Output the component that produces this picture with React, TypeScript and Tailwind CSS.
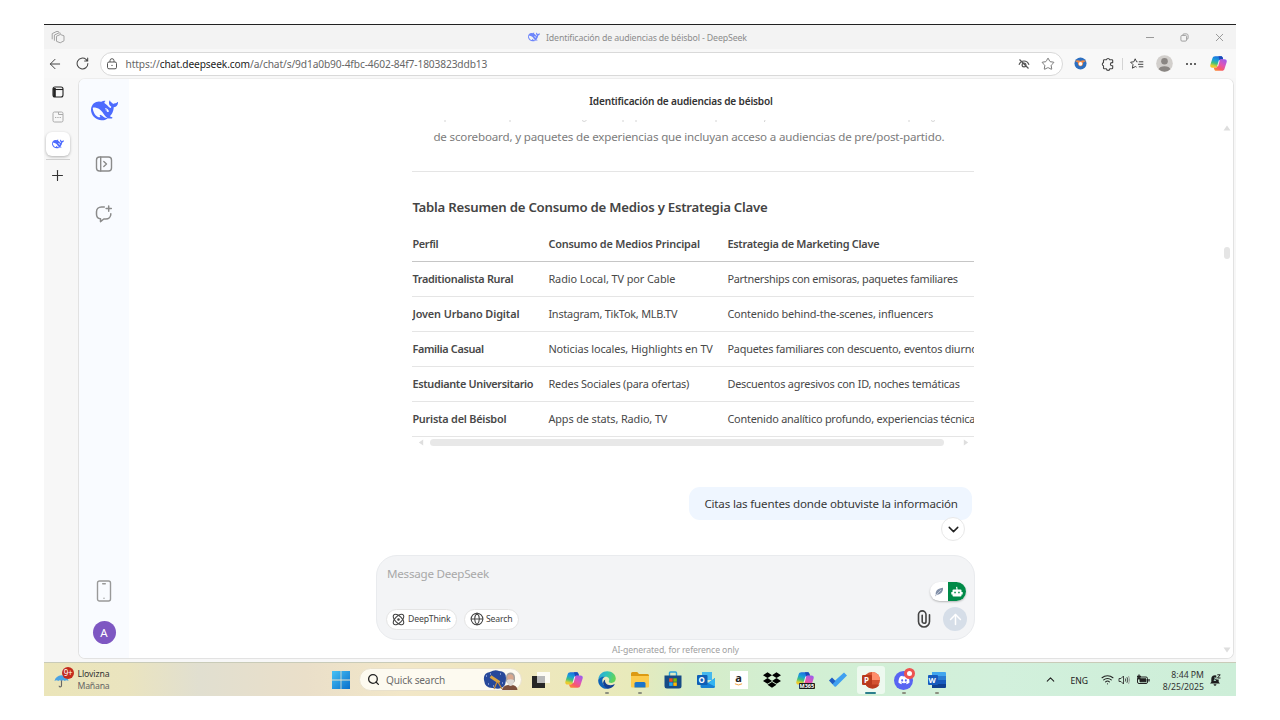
import React from 'react';
import { ArrowLeft, ArrowUp, ChevronDown, ChevronUp, Globe, Plus, Search, Star, Wifi, X } from 'lucide-react';
import { FaDiscord, FaDropbox } from 'react-icons/fa';

type IconProps = { className?: string };

const WHALE =
  'M23.748 4.482c-.254-.124-.364.113-.512.234-.051.039-.094.09-.137.136-.372.397-.806.657-1.373.626-.829-.046-1.537.214-2.163.848-.133-.782-.575-1.248-1.247-1.548-.352-.156-.708-.311-.955-.65-.172-.241-.219-.51-.305-.774-.055-.16-.11-.323-.293-.35-.2-.031-.278.136-.356.276-.313.572-.434 1.202-.422 1.84.027 1.436.633 2.58 1.838 3.393.137.093.172.187.129.323-.082.28-.18.552-.266.833-.055.179-.137.217-.329.14a5.526 5.526 0 0 1-1.736-1.18c-.857-.828-1.631-1.742-2.597-2.458a11.365 11.365 0 0 0-.689-.471c-.985-.957.13-1.743.388-1.836.27-.098.093-.432-.779-.428-.872.004-1.67.295-2.687.684a3.055 3.055 0 0 1-.465.137 9.597 9.597 0 0 0-2.883-.102c-1.885.21-3.39 1.102-4.497 2.623C.082 8.606-.231 10.684.152 12.85c.403 2.284 1.569 4.175 3.36 5.653 1.858 1.533 3.997 2.284 6.438 2.14 1.482-.085 3.133-.284 4.994-1.86.47.234.962.327 1.78.397.63.059 1.236-.03 1.705-.128.735-.156.684-.837.419-.961-2.155-1.004-1.682-.595-2.113-.926 1.096-1.296 2.746-2.642 3.392-7.003.05-.347.007-.565 0-.845-.004-.17.035-.237.23-.256a4.173 4.173 0 0 0 1.545-.475c1.396-.763 1.96-2.015 2.093-3.517.02-.23-.004-.467-.247-.588zM11.581 18c-2.089-1.642-3.102-2.183-3.52-2.16-.392.024-.321.471-.235.763.09.288.207.486.371.739.114.167.192.416-.113.603-.673.416-1.842-.14-1.897-.167-1.361-.802-2.5-1.86-3.301-3.307-.774-1.393-1.224-2.887-1.298-4.482-.02-.386.093-.522.477-.592a4.696 4.696 0 0 1 1.529-.039c2.132.312 3.946 1.265 5.468 2.774.868.86 1.525 1.887 2.202 2.891.72 1.066 1.494 2.082 2.48 2.914.348.292.625.514.891.677-.802.09-2.14.11-3.054-.614zm1-6.44a.306.306 0 0 1 .415-.287.302.302 0 0 1 .2.288.306.306 0 0 1-.31.307.303.303 0 0 1-.304-.308zm3.11 1.596c-.2.081-.399.151-.59.16a1.245 1.245 0 0 1-.798-.254c-.274-.23-.47-.358-.552-.758a1.73 1.73 0 0 1 .016-.588c.07-.327-.008-.537-.239-.727-.187-.156-.426-.199-.688-.199a.559.559 0 0 1-.254-.078.253.253 0 0 1-.114-.358c.028-.054.16-.186.192-.21.356-.202.767-.136 1.146.016.352.144.618.408 1.001.782.391.451.462.576.685.914.176.265.336.537.445.848.067.195-.019.354-.25.452z';

const Whale = ({ className }: IconProps) => (
  <svg viewBox="0 0 24 24" className={className} fill="#4d6bfe"><path d={WHALE} /></svg>
);

const Copilot = ({ className, id }: IconProps & { id: string }) => (
  <svg viewBox="0 0 18 18" className={className}>
    <defs>
      <linearGradient id={`${id}a`} x1=".5" y1="0" x2=".2" y2="1">
        <stop offset="0" stopColor="#1b6fe0" /><stop offset=".35" stopColor="#1aa0d8" /><stop offset=".6" stopColor="#3fbf7c" /><stop offset=".85" stopColor="#e3d030" /><stop offset="1" stopColor="#f8c22a" />
      </linearGradient>
      <linearGradient id={`${id}b`} x1=".9" y1="0" x2=".2" y2="1">
        <stop offset="0" stopColor="#9a5cf0" /><stop offset=".45" stopColor="#e055b4" /><stop offset=".75" stopColor="#f9596a" /><stop offset="1" stopColor="#fb8a34" />
      </linearGradient>
    </defs>
    <path d="M5.400 1.200h6.200c1 0 1.500.6 1.800 1.500l.6 2h-2c-1 0-1.600.7-1.900 1.600L8.200 12c-.3.900-.9 1.500-1.900 1.500H2.600C.6 13.500-.1 12.200.4 10.400l2.200-7c.4-1.400 1.300-2.200 2.800-2.200z" fill={`url(#${id}a)`} />
    <path d="M9 1.200h2.600c1 0 1.500.6 1.800 1.500l.6 2h-2c-.8 0-1.400.4-1.700 1z" fill="#1b48b8" />
    <path d="M12.600 16.800H6.400c-1 0-1.500-.6-1.800-1.500l-.6-1.900h2c1 0 1.600-.7 1.900-1.600L9.800 6c.3-.9.900-1.500 1.900-1.500h3.700c2 0 2.700 1.300 2.200 3.100l-2.200 7c-.4 1.400-1.300 2.200-2.800 2.200z" fill={`url(#${id}b)`} />
    <path d="M9.300 5.500h1L8.700 11.800H7.500z" fill="#fff" opacity=".85" />
  </svg>
);

const Tabs = () => (
  <svg viewBox="0 0 14 14" className="size-[14px]" fill="none" stroke="#a3a3a3" strokeWidth="1">
    <path d="M5.500 6.200 9.300 4.500l3.700 1.300v5L9.200 12.800 5.500 11.300z" />
    <path d="M3.400 10.700V5l4.700-2.200 1.700.6M1.200 9.300V3.600L6 1.300l2 .7" />
  </svg>
);

const Reload = () => (
  <svg viewBox="0 0 14 14" className="size-[13px]" fill="none" stroke="#444" strokeWidth="1.100" strokeLinecap="round">
    <path d="M12.800 7a5.800 5.800 0 1 1-2-4.400l1.600 1.600M12.600 1v3.300H9.300" />
  </svg>
);

const Lock = () => (
  <svg viewBox="0 0 12 12" className="size-[12px]" fill="none" stroke="#555" strokeWidth="1">
    <rect x="1.500" y="4" width="9" height="6.800" rx="1.500" /><path d="M4 4V2.700a2 2 0 0 1 4 0V4" /><circle cx="6" cy="7.400" r=".7" fill="#555" stroke="none" />
  </svg>
);

const EyeOff = () => (
  <svg viewBox="0 0 12 12" className="size-[12px]" fill="none" stroke="#555" strokeWidth="1.200">
    <path d="M1 6.800C2 4.300 4 3 6 3s4 1.300 5 3.800" /><circle cx="6" cy="7" r="1.900" /><path d="M1.500 1.500l9 9" />
  </svg>
);

const Bird = () => (
  <svg viewBox="0 0 14 14" className="size-[13px]">
    <circle cx="7" cy="7" r="6.500" fill="#2d6fc0" /><path d="M1 4.300Q4 2.500 7 4.200 10 2.500 13 4.300L9.800 5.800Q10 9.500 7 10 4 9.500 4.200 5.800z" fill="#f08a48" /><circle cx="7" cy="7.300" r="2" fill="#fff" />
  </svg>
);

const PuzzleIcon = () => (
  <svg viewBox="0 0 14 14" className="size-[14px]" fill="none" stroke="#444" strokeWidth="1.100" strokeLinejoin="round">
    <path d="M3.300 2.800h2.100a1.700 1.700 0 0 1 3.300 0h2.200a.8.8 0 0 1 .8.8v2H11a1.500 1.500 0 0 0 0 3.200h.7v2.100a.8.8 0 0 1-.8.800H8.800a1.700 1.700 0 0 1-3.400 0H3.300a.8.8 0 0 1-.8-.8V8.700a1.600 1.600 0 0 1 0-3.100v-2a.8.8 0 0 1 .8-.8z" />
  </svg>
);

const Favorites = () => (
  <svg viewBox="0 0 14 14" className="size-[14px]" fill="none" stroke="#444" strokeWidth="1" strokeLinejoin="round">
    <path d="M7.500 4.800H6.600L5.200 1.800 3.800 4.800l-3.200.4 2.400 2.400-.6 3.600 3-1.700 1.200.7" /><path d="M8.800 4.800h4.500M8 7.300h5.300M8.800 9.800h4.500" />
  </svg>
);

const Profile = () => (
  <svg viewBox="0 0 18 18" className="size-[17px]">
    <circle cx="9" cy="9" r="8.800" fill="#d2cfcc" /><circle cx="9" cy="6.600" r="3.500" fill="#8a8683" /><path d="M2.800 15.200C3.500 12.600 5.500 11.800 9 11.800s5.500.8 6.200 3.400A8.800 8.800 0 0 1 2.800 15.200z" fill="#8a8683" />
  </svg>
);

const Restore = () => (
  <svg viewBox="0 0 10 10" className="size-[9px]" fill="none" stroke="#999" strokeWidth="1">
    <rect x="1" y="2.700" width="6.300" height="6.300" rx="1.300" /><path d="M3 2.500C3 1.500 3.500 1 4.500 1H7c1.300 0 2 .7 2 2v2.500C9 6.500 8.500 7 7.500 7" />
  </svg>
);

const Slot = ({ className, children }: { className: string; children: React.ReactNode }) => (
  <div className={`flex h-full shrink-0 items-center justify-center ${className}`}>{children}</div>
);

const TitleBar = () => (
  <div className="flex h-[25px] shrink-0 items-center border-t border-[#222] bg-[#f3f3f3]">
    <Slot className="w-[28px]"><Tabs /></Slot>
    <div className="flex flex-1 items-center pl-[456px]">
      <Whale className="size-[12px] opacity-80" />
      <span className="ml-[6px] whitespace-nowrap pt-[1px] text-[8.8px] leading-[12px] tracking-[-0.152px] text-[#8c8c8c]">Identificación de audiencias de béisbol - DeepSeek</span>
    </div>
    <Slot className="w-[34px]"><span className="h-px w-[8px] bg-[#999]" /></Slot>
    <Slot className="w-[35px]"><Restore /></Slot>
    <Slot className="w-[34px]"><X className="size-[13px] text-[#8c8c8c]" strokeWidth={1.600} /></Slot>
  </div>
);

const Toolbar = () => (
  <div className="flex h-[29px] shrink-0 items-center bg-[#f8f8f8]">
    <Slot className="w-[22px]"><ArrowLeft className="size-[16px] text-[#444]" strokeWidth={1.500} /></Slot>
    <Slot className="w-[32px]"><Reload /></Slot>
    <div className="ml-[2px] mr-[4px] flex h-[24px] flex-1 items-center rounded-full border border-[#d9d9d9] bg-white pl-[5px] pr-[7px]">
      <Lock />
      <span className="ml-[7.500px] flex-1 whitespace-nowrap text-[10.2px] leading-[14px] tracking-[-0.123px] text-[#666]">
        https://<span className="text-[#222]">chat.deepseek.com</span>/a/chat/s/9d1a0b90-4fbc-4602-84f7-1803823ddb13
      </span>
      <EyeOff />
      <Star className="ml-[11px] size-[14px] text-[#666]" strokeWidth={1.500} />
    </div>
    <Slot className="w-[27px]"><Bird /></Slot>
    <Slot className="w-[27px]"><PuzzleIcon /></Slot>
    <span className="ml-[1px] h-[12px] w-px bg-[#d4d4d4]" />
    <Slot className="w-[28px]"><Favorites /></Slot>
    <Slot className="w-[26px]"><Profile /></Slot>
    <Slot className="w-[27px] gap-[2px]">
      <span className="size-[2px] rounded-full bg-[#333]" /><span className="size-[2px] rounded-full bg-[#333]" /><span className="size-[2px] rounded-full bg-[#333]" />
    </Slot>
    <Slot className="mr-[3px] w-[29px]"><Copilot id="bar" className="size-[17px]" /></Slot>
  </div>
);

const TabRail = () => (
  <div className="flex w-[34px] shrink-0 flex-col items-center bg-[#f7f7f7] pr-[7px] pt-[8px]">
    <svg viewBox="0 0 12 12" className="size-[12px]" fill="none" stroke="#222" strokeWidth="1.100">
      <rect x="1" y="1" width="10" height="10" rx="2" /><path d="M1 3.500h10" /><path d="M2.500 2v9" strokeWidth="2.600" />
    </svg>
    <svg viewBox="0 0 12 12" className="mt-[13px] size-[12px]" fill="none" stroke="#aaa" strokeWidth="1">
      <path d="M6.500 1H2.500Q1 1 1 2.500v7Q1 11 2.500 11h7Q11 11 11 9.500v-6M6.500 1v2.500H11V2.500Q11 1 9.500 1z" /><path d="M3 6.500h6" strokeDasharray="1.300 1" />
    </svg>
    <div className="mt-[9px] flex size-[24px] items-center justify-center rounded-[6px] bg-white shadow-[0_1px_3px_rgba(0,0,0,0.28)]"><Whale className="size-[12px]" /></div>
    <span className="mt-[3px] h-px w-[24px] bg-[#d0d0d0]" />
    <Plus className="mt-[7px] size-[17px] text-[#333]" strokeWidth={1.600} />
  </div>
);

const ChatSidebar = () => (
  <div className="flex w-[50px] shrink-0 flex-col items-center bg-[#f9fbff] pb-[14px] pt-[18px]">
    <Whale className="size-[27px]" />
    <svg viewBox="0 0 18 18" className="mt-[31px] size-[18px]" fill="none" stroke="#8b8b8b" strokeWidth="1.400" strokeLinecap="round" strokeLinejoin="round">
      <rect x="1.500" y="2" width="15" height="14" rx="3" /><path d="M5.700 2v14M8.800 6.500 11.500 9l-2.700 2.500" />
    </svg>
    <svg viewBox="0 0 18 18" className="mt-[32px] size-[18px]" fill="none" stroke="#8b8b8b" strokeWidth="1.500" strokeLinecap="round" strokeLinejoin="round">
      <path d="M9.300 2H6.500C3.600 2 1.500 4 1.500 6.800v2.400C1.500 12 3.200 13.500 5.500 13.800V16.700L8.800 14h1.900c3 0 5.100-2 5.100-4.800V8.700M13.700 1v5.200M11.100 3.600h5.200" />
    </svg>
    <div className="flex-1" />
    <svg viewBox="0 0 16 22" className="h-[22px] w-[16px]" fill="none" stroke="#999" strokeWidth="1.400" strokeLinecap="round">
      <rect x="1.500" y="1" width="13" height="20" rx="2" /><path d="M6.700 3.700h2.600M8 18.300h.01" />
    </svg>
    <div className="mt-[19px] flex size-[23px] items-center justify-center rounded-full bg-[#7e57c2] text-[11.500px] leading-[23px] text-white">A</div>
  </div>
);

const ROWS = [
  { a: 'Traditionalista Rural', at: 'tracking-[-0.29px]', b: 'Radio Local, TV por Cable', bt: 'tracking-[-0.07px]', c: 'Partnerships con emisoras, paquetes familiares', ct: 'tracking-[-0.261px]' },
  { a: 'Joven Urbano Digital', at: 'tracking-[-0.12px]', b: 'Instagram, TikTok, MLB.TV', bt: 'tracking-[-0.212px]', c: 'Contenido behind-the-scenes, influencers', ct: 'tracking-[-0.176px]' },
  { a: 'Familia Casual', at: 'tracking-[-0.34px]', b: 'Noticias locales, Highlights en TV', bt: 'tracking-[-0.109px]', c: 'Paquetes familiares con descuento, eventos diurnos', ct: 'tracking-[-0.22px]' },
  { a: 'Estudiante Universitario', at: 'tracking-[-0.325px]', b: 'Redes Sociales (para ofertas)', bt: 'tracking-[-0.19px]', c: 'Descuentos agresivos con ID, noches temáticas', ct: 'tracking-[-0.207px]' },
  { a: 'Purista del Béisbol', at: 'tracking-[-0.223px]', b: 'Apps de stats, Radio, TV', bt: 'tracking-[-0.112px]', c: 'Contenido analítico profundo, experiencias técnicas', ct: 'tracking-[-0.22px]' },
];

const SummaryTable = () => (
  <div className="w-[562px] overflow-hidden whitespace-nowrap text-[10.9px] leading-[16px] text-[#484848]">
    <div className="grid h-[35px] grid-cols-[136px_179px_247px] items-center border-b border-[#c6c6c6] font-semibold">
      <span className="tracking-[-0.34px]">Perfil</span>
      <span className="tracking-[-0.19px]">Consumo de Medios Principal</span>
      <span className="tracking-[-0.263px]">Estrategia de Marketing Clave</span>
    </div>
    {ROWS.map((r) => (
      <div key={r.a} className="grid h-[35px] grid-cols-[136px_179px_247px] items-center border-b border-[#e5e5e5]">
        <span className={`font-semibold ${r.at}`}>{r.a}</span>
        <span className={r.bt}>{r.b}</span>
        <span className={r.ct}>{r.c}</span>
      </div>
    ))}
    <div className="flex h-[11px] items-center justify-between pl-[6px] pr-[5px]">
      <svg viewBox="0 0 6 8" className="h-[7px] w-[6px]" fill="#dedede"><path d="M5.500.5v7L.5 4z" /></svg>
      <span className="ml-[6px] mr-auto h-[7px] w-[514px] rounded-full bg-[#e8e8e8]" />
      <svg viewBox="0 0 6 8" className="h-[7px] w-[6px]" fill="#dedede"><path d="M.5.5v7l5-3.500z" /></svg>
    </div>
  </div>
);

const Composer = () => (
  <div className="ml-[247px] flex h-[85px] w-[599px] shrink-0 flex-col rounded-[21px] border border-[#e9ebee] bg-[#f3f4f6] pl-[9px] pr-[7px] pt-[9px]">
    <div className="pl-[1px] text-[11.6px] leading-[17px] tracking-[-0.233px] text-[#a8a8a8]">Message DeepSeek</div>
    <div className="ml-auto mr-[1px] flex h-[19px] w-[36px] overflow-hidden rounded-full bg-white shadow-[0_1px_2px_rgba(0,0,0,0.25)]">
      <div className="flex w-[18px] items-center justify-center">
        <svg viewBox="0 0 10 10" className="size-[10px]"><path d="M1 9.500 1.800 7.500C1 4 4.500 1 9 .8 9.500 4 7 8 2.800 7.800z" fill="#8391a9" /><path d="M2 8 7 3" stroke="#dfe4ec" strokeWidth=".6" /></svg>
      </div>
      <div className="flex w-[18px] items-center justify-center bg-[#008a48]">
        <svg viewBox="0 0 12 12" className="size-[12px]" fill="#fff"><path d="M5.500 3.500 5 1l1.200-.3.400 2.800H9.500a1 1 0 0 1 1 1V6h1.200v2.500H10.500V9.500a1 1 0 0 1-1 1h-7a1 1 0 0 1-1-1v-1H.3V6H1.500V4.500a1 1 0 0 1 1-1z" /><path d="M3.300 5.700h1.500V7.200H3.300zM7.200 5.700h1.500V7.200H7.200z" fill="#008a48" /></svg>
      </div>
    </div>
    <div className="mt-[6px] flex h-[24px] items-center">
      <div className="flex h-[21px] w-[71px] items-center rounded-full border border-[#e4e4e4] bg-white pl-[5px] text-[8.7px] leading-[12px] tracking-[-0.17px] text-[#444]">
        <svg viewBox="0 0 14 14" className="mr-[3px] size-[13px] shrink-0" fill="none" stroke="#444" strokeWidth="1.200">
          <ellipse cx="7" cy="7" rx="7.200" ry="3.600" transform="rotate(45 7 7)" /><ellipse cx="7" cy="7" rx="7.200" ry="3.600" transform="rotate(-45 7 7)" /><circle cx="7" cy="7" r=".8" fill="#444" />
        </svg>
        DeepThink
      </div>
      <div className="ml-[7px] flex h-[21px] w-[55px] items-center rounded-full border border-[#e4e4e4] bg-white pl-[5px] text-[8.7px] leading-[12px] tracking-[-0.17px] text-[#444]">
        <Globe className="mr-[2px] size-[14px] shrink-0" strokeWidth={1.800} />
        Search
      </div>
      <svg viewBox="0 0 14 18" className="ml-auto mr-[12px] h-[18px] w-[14px]" fill="none" stroke="#444" strokeWidth="1.600" strokeLinecap="round">
        <path d="M12.500 4.800v6.700a5.500 5.500 0 0 1-11 0V4.600a3.700 3.700 0 0 1 7.500 0v6.800a1.900 1.900 0 0 1-3.800 0V5.200" />
      </svg>
      <div className="flex size-[24px] items-center justify-center rounded-full bg-[#d6dee8]"><ArrowUp className="size-[17px] text-white" strokeWidth={2.100} /></div>
    </div>
  </div>
);

const Chat = () => (
  <div className="relative flex min-w-0 flex-1 flex-col bg-white">
    <div className="flex h-[41px] shrink-0 items-center justify-center pt-[2px] text-[10.1px] font-semibold leading-[14px] tracking-[-0.184px] text-[#333]">Identificación de audiencias de béisbol</div>
    <svg viewBox="0 0 562 5" className="ml-[283px] h-[5px] w-[562px] shrink-0" fill="none" stroke="#d4d4d4" strokeWidth="1">
      <path d="M33 0v2M98 0v2M211 0v2M224 0v2M304 0v2M353 0l-.6 2M170 .5q2 2 4.500 0M497 0v2M519 .5q2 2 4 0" />
    </svg>
    <div className="ml-[283.400px] flex w-[562px] shrink-0 flex-col">
      <p className="h-[46px] whitespace-nowrap pl-[21px] pt-[2px] text-[11.6px] leading-[19px] tracking-[-0.172px] text-[#7c7c7c]">de scoreboard, y paquetes de experiencias que incluyan acceso a audiencias de pre/post-partido.</p>
      <hr className="border-[#e5e5e5]" />
      <h3 className="h-[55px] pt-[25px] text-[13.2px] font-semibold leading-[20px] tracking-[-0.237px] text-[#444]">Tabla Resumen de Consumo de Medios y Estrategia Clave</h3>
      <SummaryTable />
      <div className="ml-auto mr-[2px] mt-[39px] flex h-[33px] w-[283px] items-center whitespace-nowrap rounded-[11px] bg-[#eff6ff] pl-[15px] text-[11.6px] leading-[18px] tracking-[-0.179px] text-[#383838]">Citas las fuentes donde obtuviste la información</div>
    </div>
    <div className="-mt-[3px] mb-[14px] ml-[812px] flex size-[24px] shrink-0 items-center justify-center rounded-full border border-[#e8e8e8] bg-white"><ChevronDown className="size-[17px] text-[#222]" strokeWidth={2.100} /></div>
    <Composer />
    <div className="ml-[247px] w-[599px] pt-[4px] text-center text-[8.7px] leading-[13px] tracking-[-0.12px] text-[#a0a0a0]">AI-generated, for reference only</div>
    <div className="absolute inset-y-0 right-0 flex w-[12px] flex-col items-center pb-[5px] pt-[46px]">
      <svg viewBox="0 0 8 6" className="h-[6px] w-[8px]" fill="#dedede"><path d="M4 .5 7.500 5.500h-7z" /></svg>
      <span className="mt-[116px] h-[12px] w-[6px] rounded-full bg-[#e5e5e5]" />
      <svg viewBox="0 0 8 6" className="mt-auto h-[6px] w-[8px]" fill="#dedede"><path d="M4 5.500 7.500.5h-7z" /></svg>
    </div>
  </div>
);

const TaskItem = ({ children, mark, active }: { children: React.ReactNode; mark?: boolean; active?: boolean }) => (
  <div className="flex w-[33px] shrink-0 flex-col items-center pt-[3px]">
    <div className={`flex size-[28px] shrink-0 items-center justify-center rounded-[3px] ${active ? 'bg-white/60' : ''}`}>{children}</div>
    {active ? <span className="-mt-[2px] h-[2px] w-[11px] shrink-0 rounded-full bg-[#2b7f8c]" /> : mark ? <span className="-mt-[2px] h-[2px] w-[4px] shrink-0 rounded-full bg-[#8b8f7f]" /> : null}
  </div>
);

const Taskbar = () => (
  <div className="flex h-[34px] shrink-0 border-t border-[#c9cbb8] bg-[linear-gradient(90deg,#ebe5b9_0%,#eae4bf_7%,#e1dfd0_13%,#eadfc9_22%,#f2e7c8_30%,#efe7bd_40%,#e8eabb_49%,#d6ecc8_54%,#d2efd2_62%,#d2f0dc_80%,#cdeed8_100%)]">
    <div className="relative w-[33px] shrink-0">
      <svg viewBox="0 0 16 16" className="absolute left-[10px] top-[10px] size-[15px]"><path d="M.5 8.500Q2 3 8 2.500 14 3 15.500 8.500 13 7 11.500 8.500 10 7 8 8.500 6 7 4.500 8.500 3 7 .5 8.500z" fill="#4ba3e3" /><path d="M8 8v5.500q-.2 1.500-1.500 1.300-1-.2-1-1.300" fill="none" stroke="#666" strokeWidth="1.200" /></svg>
      <span className="absolute left-[18px] top-[4px] flex size-[12px] items-center justify-center rounded-full bg-[#c42b1c] text-[8px] leading-[12px] tracking-[-0.3px] text-white">9+</span>
    </div>
    <div className="w-[254px] shrink-0 pl-[0.500px] pt-[5px] text-[8.7px] leading-[12px]">
      <div className="tracking-[-0.11px] text-[#333]">Llovizna</div>
      <div className="tracking-[-0.2px] text-[#666]">Mañana</div>
    </div>
    <div className="flex h-full w-[20px] shrink-0 items-center justify-center">
      <svg viewBox="0 0 18 18" className="size-[18px]"><defs><linearGradient id="win" x1="0" y1="0" x2="1" y2="1"><stop offset="0" stopColor="#47c2f5" /><stop offset="1" stopColor="#0a6fcb" /></linearGradient></defs><path d="M0 0h8.600v8.600H0zM9.400 0H18v8.600H9.400zM0 9.400h8.600V18H0zM9.400 9.400H18V18H9.400z" fill="url(#win)" /></svg>
    </div>
    <div className="ml-[8px] mr-[2px] mt-[5px] flex h-[23px] w-[163px] shrink-0 items-center rounded-full border border-[#e9e1cc] bg-[#fdfaf0] pl-[7px]">
      <Search className="size-[13px] text-[#222]" strokeWidth={2.400} />
      <span className="ml-[6px] whitespace-nowrap text-[10.1px] leading-[14px] tracking-[-0.155px] text-[#6b6b6b]">Quick search</span>
      <svg viewBox="0 0 36 20" className="ml-auto mr-[3px] h-[20px] w-[36px]">
        <path d="M2 10Q1 3 8 2q5-3 9-1 7 0 7 7 0 7-3 9-4 3-9 1-9 1-10-8z" fill="#27489a" />
        <path d="M4 6h1M8 4h1M6 14h1M18 4h1M11 16h1M20 13h1" stroke="#cdd9ff" strokeWidth="1" />
        <path d="M8.500 6.500l9 6" stroke="#dba544" strokeWidth="3" /><path d="M15 12l-3 7M16 12l4 7" stroke="#c98d3c" strokeWidth="1.200" />
        <path d="M20 20q1-4.500 6-5h3q6 0 6.500 5z" fill="#7d4f3d" /><path d="M24 7q.5-4.500 4.500-4.500T33 7v3q0 3-4.500 4-4.500-1-4.500-4z" fill="#a5a09d" /><ellipse cx="28.400" cy="7.800" rx="3.200" ry="3.600" fill="#d8a78e" /><path d="M25 10q3.500-1.500 7 0 0 5.500-3.500 6Q25 15.500 25 10z" fill="#dcd8d5" />
      </svg>
    </div>
    <TaskItem><svg viewBox="0 0 18 18" className="size-[18px]"><path d="M0 5h13v12H0z" fill="#262626" /><path d="M5 1h13v11H5z" fill="#fff" opacity=".8" /><path d="M5 5h8v7H5z" fill="#b9b9b9" /></svg></TaskItem>
    <TaskItem><Copilot id="task" className="size-[18px]" /></TaskItem>
    <TaskItem mark>
      <svg viewBox="0 0 18 18" className="size-[18px]"><defs><linearGradient id="edge" x1="0" y1="0" x2="1" y2=".3"><stop offset="0" stopColor="#2a9fdf" /><stop offset=".5" stopColor="#2fc3bd" /><stop offset="1" stopColor="#61d45a" /></linearGradient></defs>
        <path d="M.3 8C1 3.500 4.500.2 9.200.2c5 0 8.600 3.500 8.600 7.300 0 2.600-1.900 4.400-4.300 4.400-2 0-3.300-.7-2.500-1.900 1-2-.5-4.300-3.300-4.300C4 5.700 1.500 7 .3 8z" fill="url(#edge)" />
        <path d="M.2 9.500C.2 7 3.500 5.300 7 5.700c-2 .8-3 2.600-2.600 5 .4 3 3 5.500 6.300 6.900-6 1.200-10.500-3-10.500-8.100z" fill="#0d62b8" />
        <path d="M7.200 8.500c-1.200 4 3.500 7.300 9 4.700.4-.2.700.1.500.4-1.600 2.700-4.500 4.300-7 4-4-1.300-6.700-6.400-2.500-9.100z" fill="#123f92" />
      </svg>
    </TaskItem>
    <TaskItem mark>
      <svg viewBox="0 0 18 18" className="size-[18px]"><path d="M0 2.500Q0 1 1.500 1h4.700L8 3h8.500Q18 3 18 4.500V8H0z" fill="#dc9a13" /><path d="M0 5h18v10.500q0 1-1 1H1q-1 0-1-1z" fill="#fccb4c" /><path d="M3.500 16.500v-4q0-1.500 1.500-1.500h8q1.500 0 1.500 1.500v4z" fill="#1b75ca" /></svg>
    </TaskItem>
    <TaskItem>
      <svg viewBox="0 0 18 18" className="size-[18px]"><path d="M5.500 5V2q0-1 1-1h5q1 0 1 1v3" fill="none" stroke="#2da3dd" strokeWidth="1.400" /><path d="M.5 4.500h17V15q0 2.500-2.500 2.500H3Q.5 17.500.5 15z" fill="#164b86" /><path d="M5.200 7.300h3.500v3.500H5.200z" fill="#f25022" /><path d="M9.300 7.300h3.500v3.500H9.300z" fill="#7fba00" /><path d="M5.200 11.400h3.500v3.500H5.200z" fill="#23a9f2" /><path d="M9.300 11.400h3.500v3.500H9.300z" fill="#ffb900" /></svg>
    </TaskItem>
    <TaskItem>
      <div className="relative size-[18px]">
        <svg viewBox="0 0 18 18" className="size-[18px]"><path d="M5 1h10v8H5z" fill="#45b8ee" /><path d="M3.500 7 11 12l7-5v8.500q0 1.500-1.500 1.500H5q-1.500 0-1.500-1.500z" fill="#1781d4" /><path d="M18 7v8.500L11 12z" fill="#32b5f1" /><rect y="4" width="10.500" height="10" rx="1" fill="#0f5fb5" /></svg>
        <span className="absolute left-[2px] top-[4px] text-[8px] font-bold leading-[10px] text-white">O</span>
      </div>
    </TaskItem>
    <TaskItem>
      <div className="flex h-[18px] w-[18px] flex-col items-center bg-white">
        <span className="h-[12px] text-[11px] font-bold leading-[13px] text-[#222]">a</span>
        <svg viewBox="0 0 10 3" className="h-[3px] w-[9px]" fill="none" stroke="#f29a2e" strokeWidth="1"><path d="M1 .7q4 2.600 8 0" /></svg>
      </div>
    </TaskItem>
    <TaskItem><FaDropbox className="size-[18px] text-black" /></TaskItem>
    <TaskItem>
      <div className="relative size-[18px]">
        <Copilot id="m365" className="size-[18px]" />
        <span className="absolute left-[3px] top-[12px] rounded-[1px] bg-[#1a1a1a] px-[1px] text-[5.500px] font-bold leading-[6px] text-white">M365</span>
      </div>
    </TaskItem>
    <TaskItem><svg viewBox="0 0 18 18" className="size-[18px]"><path d="M5.500 15.500 2.800 12.600 15 1.500 18 4.500 7 15.500q-.8.700-1.500 0z" fill="#3fa0f0" /><path d="M0 9.500 3 6.500 6.500 10 3.500 13.300z" fill="#1f5ec4" /></svg></TaskItem>
    <TaskItem active>
      <div className="relative size-[18px]">
        <svg viewBox="0 0 18 18" className="size-[18px]"><circle cx="10" cy="9" r="8" fill="#d35230" /><path d="M10 1a8 8 0 0 1 8 8h-8z" fill="#ff8f6b" /><path d="M3.500 13.500h14A8 8 0 0 1 3.500 13.500z" fill="#b93a1c" /><rect y="4" width="10" height="10" rx="1" fill="#b93a1c" /></svg>
        <span className="absolute left-[2.500px] top-[4px] text-[8px] font-bold leading-[10px] text-white">P</span>
      </div>
    </TaskItem>
    <TaskItem mark>
      <div className="relative flex size-[19px] items-center justify-center rounded-full bg-[#5865f2]">
        <FaDiscord className="size-[12px] text-white" />
        <span className="absolute -top-[3px] left-[10px] size-[11px] rounded-full border-[3.500px] border-[#ee5350] bg-white" />
      </div>
    </TaskItem>
    <TaskItem mark>
      <div className="relative size-[18px]">
        <svg viewBox="0 0 18 18" className="size-[18px]"><path d="M4 1h13q1 0 1 1v3.500H4z" fill="#41a5ee" /><path d="M4 5h14v4H4z" fill="#2b7cd3" /><path d="M4 9h14v4H4z" fill="#185abd" /><path d="M4 13h14v3q0 1-1 1H4z" fill="#103f91" /><rect y="4" width="10" height="10" rx="1" fill="#185abd" /></svg>
        <span className="absolute left-[1px] top-[4px] text-[7.500px] font-bold leading-[10px] text-white">W</span>
      </div>
    </TaskItem>
    <div className="flex flex-1 items-center justify-end pr-[15px] text-[#222]">
      <ChevronUp className="size-[13px]" strokeWidth={2} />
      <span className="ml-[13px] pt-[2px] text-[8.6px] leading-[12px]">ENG</span>
      <Wifi className="ml-[13px] size-[13px]" strokeWidth={2} />
      <svg viewBox="0 0 12 12" className="ml-[4px] size-[12px]" fill="none" stroke="#333" strokeWidth=".9" strokeLinejoin="round"><path d="M1 4.500h2L5.500 2v8L3 7.500H1zM7.300 4.500q1 1.500 0 3M8.900 3.200q1.900 2.800 0 5.600" /><path d="M10.500 2q2.300 4 0 8" stroke="#999" /></svg>
      <svg viewBox="0 0 14 12" className="ml-[6px] h-[12px] w-[14px]" fill="none" stroke="#222"><rect x="1.500" y="3" width="10" height="6.500" rx="1.500" /><path d="M4 4.800h6v3H4z" fill="#222" /><path d="M13 5v2.500" strokeWidth="1.300" /><path d="M3 .5v5M1 2.500h4M1.500 4.500h3" strokeWidth="1.300" /></svg>
      <div className="ml-[12px] w-[42px] whitespace-nowrap pt-[2px] text-right text-[8.7px] leading-[12px] text-[#333]"><div>8:44 PM</div><div>8/25/2025</div></div>
      <svg viewBox="0 0 12 12" className="ml-[5px] size-[12px]"><path d="M1 9.500 2.300 8V5a3.700 3.700 0 0 1 5-3.600V5.500h2.400V8l1.300 1.500zM4.500 10.200h3q-.3 1.500-1.500 1.500t-1.500-1.500z" fill="#1d1d1d" /><path d="M8.300.8h2.900L8.500 4h3" fill="none" stroke="#222" strokeWidth="1" /><path d="M5 4h2L5 6.500h2" fill="none" stroke="#cfe" strokeWidth=".7" /></svg>
    </div>
  </div>
);

export default function App() {
  return (
    <div className="h-[720px] w-[1280px] overflow-hidden bg-white pl-[44px] pt-[24px] font-['Noto_Sans',sans-serif]">
      <div className="flex h-[672px] w-[1192px] flex-col">
        <TitleBar />
        <Toolbar />
        <div className="flex min-h-0 flex-1 bg-[#f7f7f7]">
          <TabRail />
          <div className="mb-[3px] mr-[2px] flex min-w-0 flex-1 overflow-hidden rounded-[7px] border border-[#e2e2e2] border-t-[#ededed] bg-white">
            <ChatSidebar />
            <Chat />
          </div>
        </div>
        <Taskbar />
      </div>
    </div>
  );
}
